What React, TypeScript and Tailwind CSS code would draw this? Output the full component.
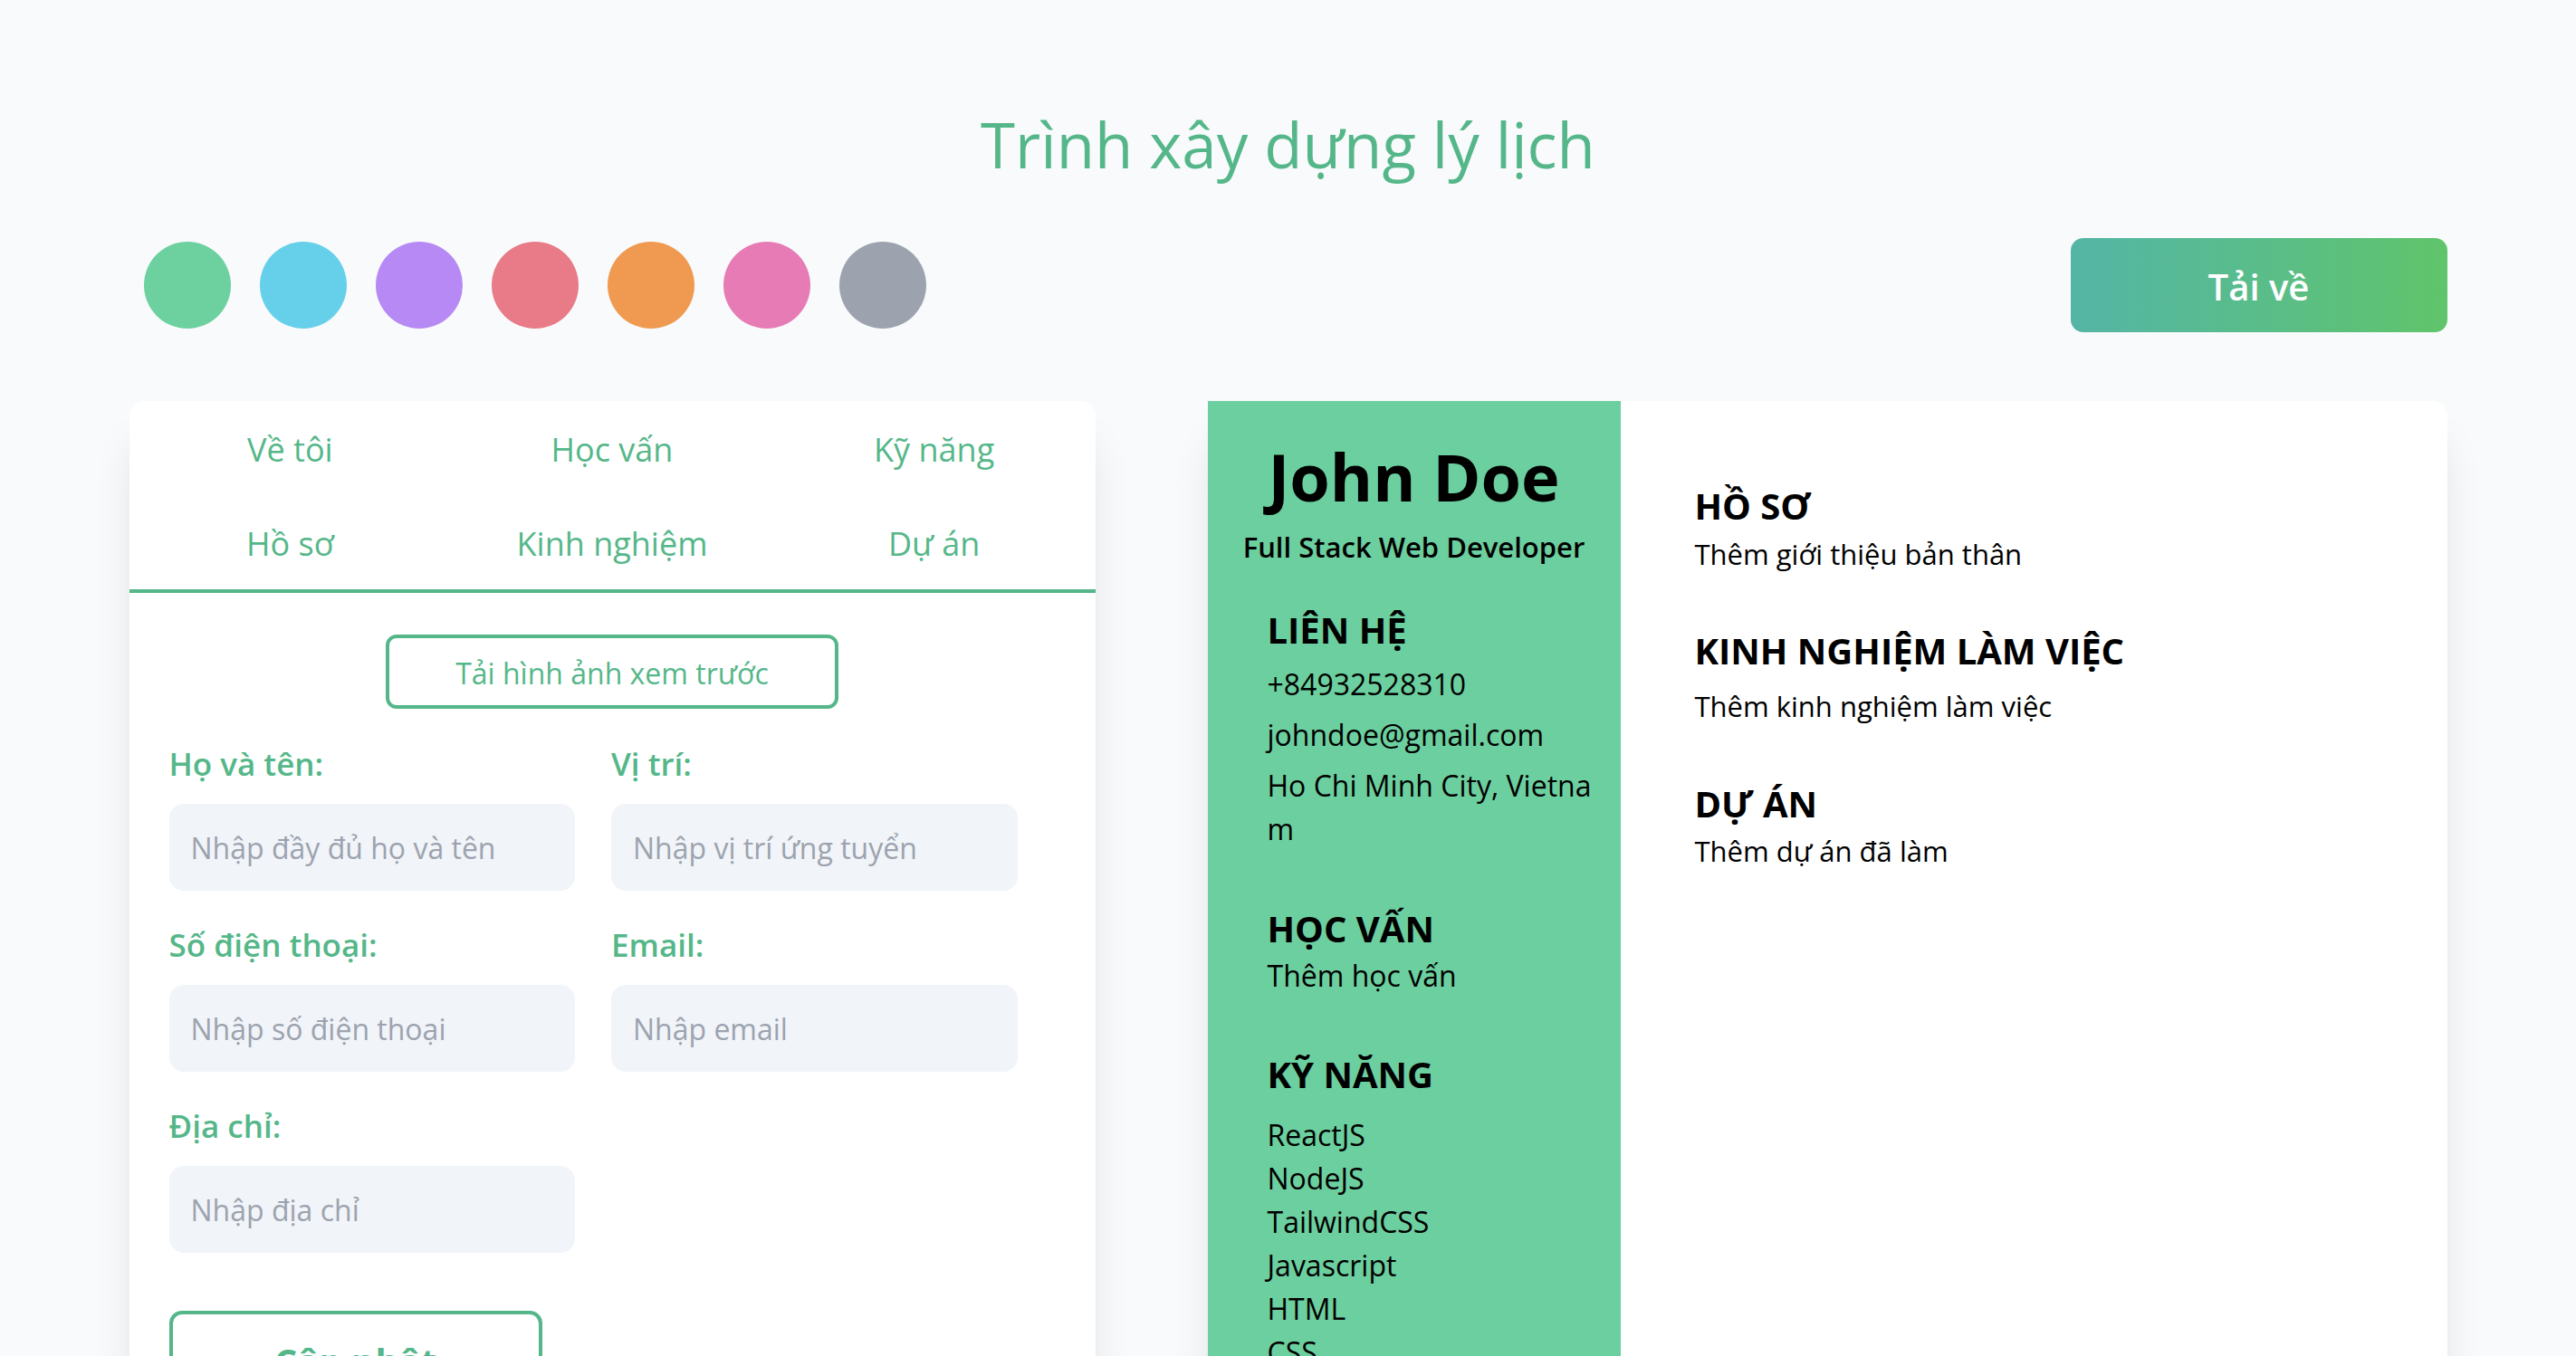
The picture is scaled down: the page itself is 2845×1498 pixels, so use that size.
const swatches = [
  "bg-[#6cd09f]",
  "bg-[#66d0ea]",
  "bg-[#b789f4]",
  "bg-[#e97a87]",
  "bg-[#ef9a50]",
  "bg-[#e77bb5]",
  "bg-[#9ca3af]",
];

const tabs = ["Về tôi", "Học vấn", "Kỹ năng", "Hồ sơ", "Kinh nghiệm", "Dự án"];

const fields = [
  { label: "Họ và tên:", placeholder: "Nhập đầy đủ họ và tên" },
  { label: "Vị trí:", placeholder: "Nhập vị trí ứng tuyển" },
  { label: "Số điện thoại:", placeholder: "Nhập số điện thoại" },
  { label: "Email:", placeholder: "Nhập email" },
  { label: "Địa chỉ:", placeholder: "Nhập địa chỉ" },
];

const skills = ["ReactJS", "NodeJS", "TailwindCSS", "Javascript", "HTML", "CSS"];

const cardShadow =
  "shadow-[0_40px_50px_-10px_rgba(0,0,0,0.12),0_20px_20px_-10px_rgba(0,0,0,0.05)]";

function EditorCard() {
  return (
    <div className={`w-[1067px] rounded-2xl bg-white ${cardShadow}`}>
      <div className="grid grid-cols-3 border-b-4 border-[#55b789]">
        {tabs.map((tab) => (
          <button
            key={tab}
            className="flex h-[104px] items-center justify-center pt-1 text-[36px] text-[#55b789]"
          >
            {tab}
          </button>
        ))}
      </div>

      <form className="px-[44px] pt-[46px] pb-[64px]">
        <button
          type="button"
          className="mx-auto block h-[82px] w-[500px] rounded-[12px] border-4 border-[#55b789] pt-1 text-[32px] font-medium text-[#55b789]"
        >
          Tải hình ảnh xem trước
        </button>

        <div className="mt-[33px] grid w-[937px] grid-cols-2 gap-x-[40px] gap-y-[32px]">
          {fields.map((f) => (
            <label key={f.label} className="block">
              <span className="block text-[35px] leading-[56px] font-semibold text-[#55b789]">
                {f.label}
              </span>
              <input
                type="text"
                placeholder={f.placeholder}
                className="mt-4 h-[96px] w-full rounded-2xl bg-[#f1f4f8] px-6 text-[32px] outline-none placeholder:text-[#9ca3af]"
              />
            </label>
          ))}
        </div>

        <button
          type="button"
          className="mt-[64px] block w-[412px] rounded-[14px] border-4 border-[#55b789] py-6 text-[40px] leading-[56px] font-bold text-[#55b789]"
        >
          Cập nhật
        </button>
      </form>
    </div>
  );
}

function ResumePreview() {
  return (
    <div className={`flex w-[1369px] rounded-2xl bg-white text-black ${cardShadow}`}>
      <aside className="w-[456px] bg-[#6ccf9f] px-[32px] pt-[43px] pb-[80px]">
        <h2 className="text-center text-[72px] leading-[80px] font-bold">John Doe</h2>
        <p className="mt-[14px] text-center text-[31px] leading-[48px] font-semibold">
          Full Stack Web Developer
        </p>

        <div className="ml-[34px]">
          <section className="mt-[40px]">
            <h3 className="text-[40px] leading-[56px] font-bold">LIÊN HỆ</h3>
            <ul className="text-[32px] leading-[48px]">
              <li className="mt-2">+84932528310</li>
              <li className="mt-2">johndoe@gmail.com</li>
              <li className="mt-2 break-all">Ho Chi Minh City, Vietnam</li>
            </ul>
          </section>

          <section className="mt-[58px]">
            <h3 className="text-[40px] leading-[56px] font-bold">HỌC VẤN</h3>
            <p className="text-[32px] leading-[48px]">Thêm học vấn</p>
          </section>

          <section className="mt-[57px]">
            <h3 className="text-[40px] leading-[56px] font-bold">KỸ NĂNG</h3>
            <ul className="mt-[15px] text-[32px] leading-[48px]">
              {skills.map((s) => (
                <li key={s}>{s}</li>
              ))}
            </ul>
          </section>
        </div>
      </aside>

      <div className="flex-1 pt-[88px] pl-[82px]">
        <section>
          <h3 className="text-[40px] leading-[56px] font-bold">HỒ SƠ</h3>
          <p className="mt-px text-[31px] leading-[48px]">Thêm giới thiệu bản thân</p>
        </section>
        <section className="mt-[55px]">
          <h3 className="text-[40px] leading-[56px] font-bold">KINH NGHIỆM LÀM VIỆC</h3>
          <p className="mt-[9px] text-[31px] leading-[48px]">Thêm kinh nghiệm làm việc</p>
        </section>
        <section className="mt-[56px]">
          <h3 className="text-[40px] leading-[56px] font-bold">DỰ ÁN</h3>
          <p className="text-[31px] leading-[48px]">Thêm dự án đã làm</p>
        </section>
      </div>
    </div>
  );
}

export default function App() {
  return (
    <div className="min-h-screen bg-[#f8fafc] font-['Open_Sans','Noto_Sans',sans-serif]">
      <div className="mx-auto w-[2560px] pt-[119px] pb-[120px]">
        <h1 className="text-center text-[69px] leading-[80px] text-[#55b789]">
          Trình xây dựng lý lịch
        </h1>

        <div className="mt-[64px] flex items-center justify-between">
          <div className="flex gap-8 pl-4">
            {swatches.map((c) => (
              <button key={c} className={`h-24 w-24 rounded-full ${c}`} />
            ))}
          </div>
          <button className="h-[104px] w-[416px] rounded-[14px] bg-gradient-to-r from-[#54b5a5] to-[#60c46a] pt-1 text-[40px] font-semibold text-white">
            Tải về
          </button>
        </div>

        <div className="mt-[76px] flex items-start justify-between">
          <EditorCard />
          <ResumePreview />
        </div>
      </div>
    </div>
  );
}
